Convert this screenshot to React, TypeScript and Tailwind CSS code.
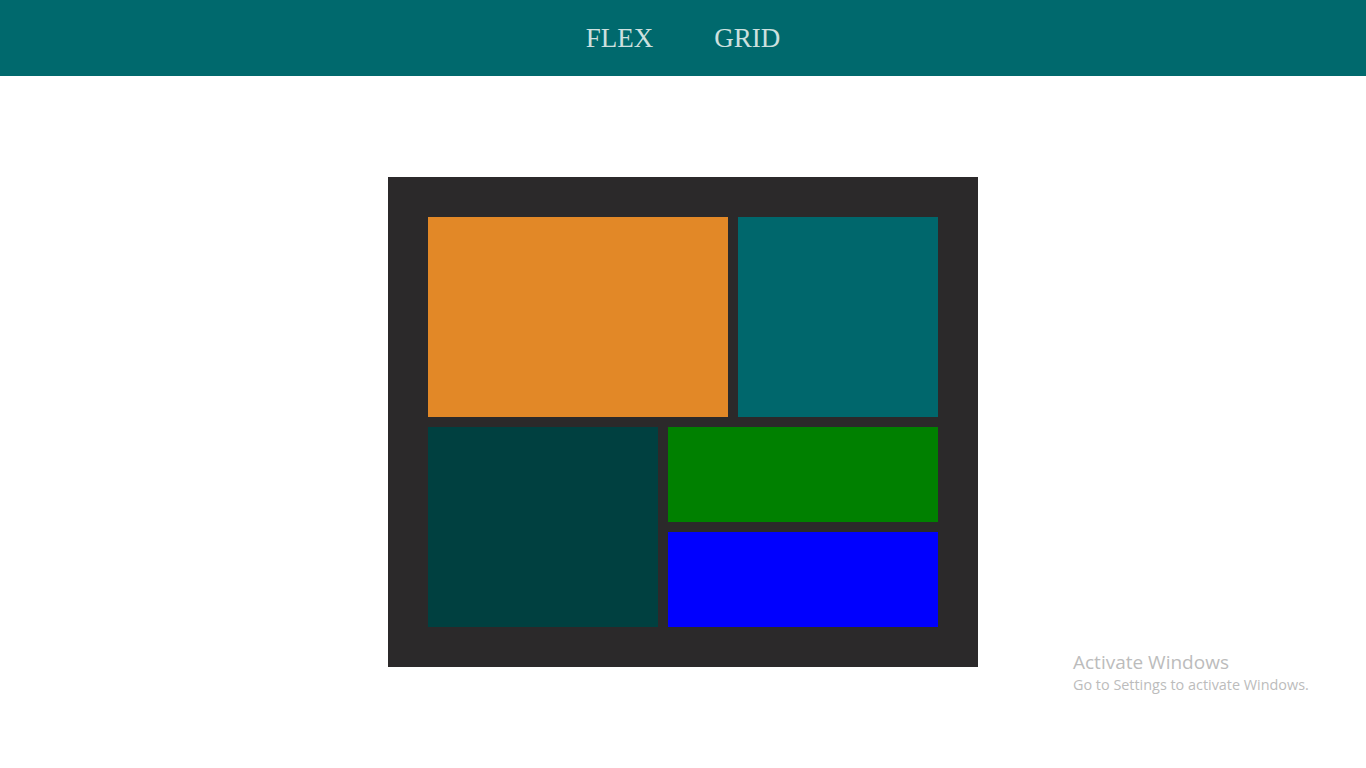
import React from "react";

const App = () => {
  return (
    <div className="relative min-h-[768px] w-full bg-white">
      {/* Nav */}
      <nav className="flex h-[76px] w-full items-center justify-center gap-[61px] bg-[#00696d]">
        <a
          href="#"
          className="text-[27px] leading-none text-[#cde0df] font-['Liberation_Serif',serif]"
        >
          FLEX
        </a>
        <a
          href="#"
          className="text-[27px] leading-none text-[#cde0df] font-['Liberation_Serif',serif]"
        >
          GRID
        </a>
      </nav>

      {/* Layout box */}
      <div className="mt-[101px] flex justify-center">
        <div className="flex w-[590px] flex-col gap-[10px] bg-[#2b292a] p-10">
          <div className="flex gap-[10px]">
            <div className="h-[200px] w-[300px] bg-[#e28827]" />
            <div className="h-[200px] w-[200px] bg-[#00676c]" />
          </div>
          <div className="flex gap-[10px]">
            <div className="h-[200px] w-[230px] bg-[#004040]" />
            <div className="flex w-[270px] flex-col gap-[10px]">
              <div className="h-[95px] bg-[#008000]" />
              <div className="h-[95px] bg-[#0000ff]" />
            </div>
          </div>
        </div>
      </div>

      {/* Windows watermark */}
      <div className="absolute left-[1073px] top-[650px] text-[#bcbcbc] font-['Open_Sans',sans-serif]">
        <div className="text-[19px] leading-[24px]">Activate Windows</div>
        <div className="text-[14.4px] leading-[21px]">
          Go to Settings to activate Windows.
        </div>
      </div>
    </div>
  );
};

export default App;
